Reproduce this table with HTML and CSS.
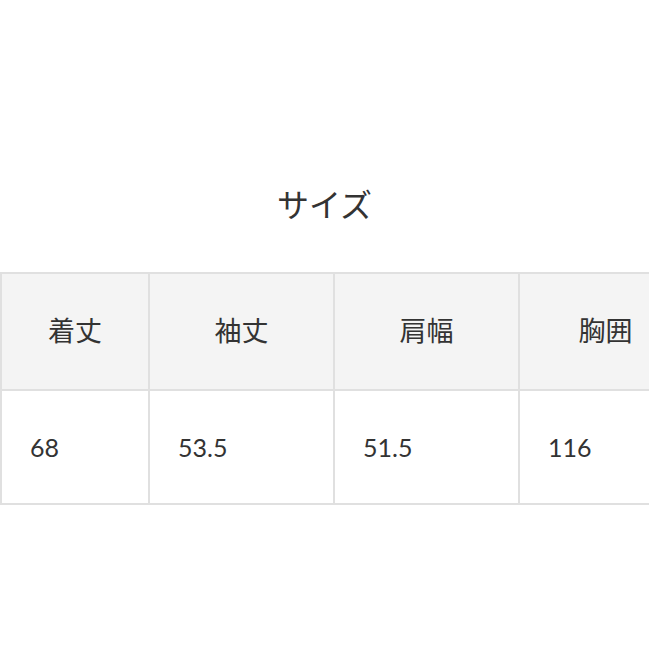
FILE: index.html
```html
<!DOCTYPE html>
<html lang="ja">
<head>
<meta charset="utf-8">
<link rel="stylesheet" href="styles.css">
</head>
<body>
<h2 class="title">サイズ</h2>
<div class="table-wrap">
<table class="size-table">
  <colgroup>
    <col class="c1"><col class="c2"><col class="c3"><col class="c4">
  </colgroup>
  <thead>
    <tr><th>着丈</th><th>袖丈</th><th>肩幅</th><th>胸囲</th></tr>
  </thead>
  <tbody>
    <tr><td>68</td><td>53.5</td><td>51.5</td><td>116</td></tr>
  </tbody>
</table>
</div>
</body>
</html>
```
FILE: styles.css
```css
html, body {
  margin: 0;
  padding: 0;
  overflow: hidden;
  background: #ffffff;
}
body {
  width: 649px;
  height: 649px;
  font-family: Lato, "Noto Sans CJK JP", sans-serif;
  color: #333333;
}
.title {
  margin: 183px 0 0 0;
  height: 40px;
  line-height: 40px;
  text-align: center;
  font-weight: 400;
  font-size: 32px;
  font-family: "Noto Sans CJK JP", sans-serif;
  color: #333333;
}
.table-wrap {
  margin-top: 49px;
  width: 649px;
  overflow: hidden;
}
.size-table {
  border-collapse: collapse;
  table-layout: fixed;
  width: 691px;
}
.c1 { width: 148px; }
.c2 { width: 185px; }
.c3 { width: 185px; }
.c4 { width: 173px; }
.size-table th,
.size-table td {
  border: 2px solid #e0e0e0;
  padding: 0;
}
.size-table th {
  height: 110px;
  padding-bottom: 5px;
  background: #f4f4f4;
  font-family: "Noto Sans CJK JP", sans-serif;
  font-weight: 400;
  font-size: 27px;
  text-align: center;
  color: #333333;
}
.size-table td {
  height: 112px;
  background: #ffffff;
  font-size: 25px;
  text-align: left;
  padding-left: 28px;
  color: #333333;
}
```
